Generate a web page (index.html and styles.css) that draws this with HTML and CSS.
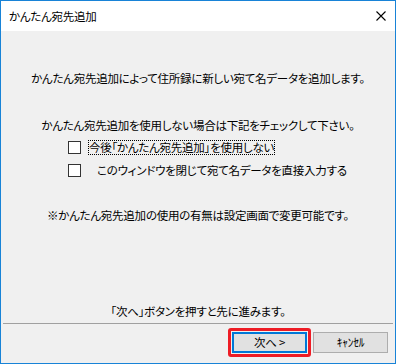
FILE: index.html
```html
<!DOCTYPE html>
<html lang="ja">
<head>
<meta charset="utf-8">
<title>かんたん宛先追加</title>
<link rel="stylesheet" href="styles.css">
</head>
<body>
<div class="window">
  <div class="titlebar">
    <span class="title">かんたん宛先追加</span>
    <svg class="close" width="10" height="10" viewBox="0 0 10 10"><path d="M0.5 0.5 L9.5 9.5 M9.5 0.5 L0.5 9.5" stroke="#000" stroke-width="1.1" fill="none"/></svg>
  </div>
  <div class="content">
    <p class="text intro">かんたん宛先追加によって住所録に新しい宛て名データを追加します。</p>
    <p class="text lead">かんたん宛先追加を使用しない場合は下記をチェックして下さい。</p>
    <div class="options">
      <label class="check"><span class="box"></span><span class="label focus">今後「かんたん宛先追加」を使用しない</span></label>
      <label class="check"><span class="box"></span><span class="label indent">このウィンドウを閉じて宛て名データを直接入力する</span></label>
    </div>
    <p class="text note">※かんたん宛先追加の使用の有無は設定画面で変更可能です。</p>
    <p class="text hint">「次へ」ボタンを押すと先に進みます。</p>
    <div class="sep"></div>
    <div class="buttons">
      <span class="highlight"><button class="btn default">次へ &gt;</button></span>
      <button class="btn">ｷｬﾝｾﾙ</button>
    </div>
  </div>
</div>
</body>
</html>
```

FILE: styles.css
```css
* { box-sizing: border-box; }
html, body { margin: 0; padding: 0; background: #ffffff; }
body {
  font-family: "Noto Sans CJK JP", "Noto Sans", sans-serif;
  font-size: 11.5px;
  letter-spacing: -0.25px;
  font-feature-settings: "palt";
  color: #000;
}
.window {
  width: 396px;
  height: 364px;
  border: 1px solid #1883d7;
  display: flex;
  flex-direction: column;
  background: #f0f0f0;
}
.titlebar {
  height: 30px;
  background: #ffffff;
  display: flex;
  align-items: center;
  justify-content: space-between;
  padding: 0 9px 0 8px;
  flex: none;
}
.title { line-height: 16px; }
.close { display: block; }
.content {
  flex: 1;
  display: flex;
  flex-direction: column;
}
.text {
  margin: 0;
  line-height: 16px;
  text-align: center;
}
.intro { margin-top: 39px; }
.lead { margin-top: 31px; }
.options {
  display: flex;
  flex-direction: column;
  gap: 6px;
  margin-top: 6px;
  padding-left: 67px;
}
.check {
  display: flex;
  align-items: center;
  height: 17px;
}
.box {
  width: 13px;
  height: 13px;
  border: 1px solid #333;
  background: #fff;
  flex: none;
}
.label {
  margin-left: 7px;
  line-height: 15px;
  padding: 0 1px;
}
.focus { outline: 1px dotted #000; outline-offset: -1px; }
.indent { margin-left: 15px; }
.note { margin-top: 28px; }
.hint { margin-top: 80px; }
.sep {
  height: 1px;
  background: #a0a0a0;
  margin: 4px 2px 0;
}
.buttons {
  display: flex;
  justify-content: flex-end;
  align-items: center;
  gap: 2px;
  padding-right: 7px;
  margin-top: 4px;
}
.highlight {
  border: 3px solid #ee1c25;
  border-radius: 3px;
  padding: 1px;
  display: flex;
}
.btn {
  width: 75px;
  height: 21px;
  background: #e1e1e1;
  border: 1px solid #adadad;
  font-family: inherit;
  font-size: 11.5px;
  letter-spacing: -0.25px;
  font-feature-settings: "palt";
  color: #000;
  padding: 0;
  line-height: 17px;
}
.btn.default {
  border: 2px solid #0078d7;
}
```
